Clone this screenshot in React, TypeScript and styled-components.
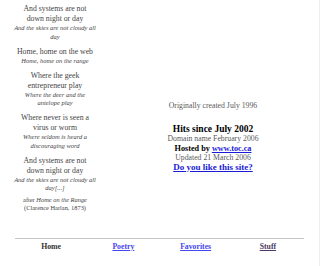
import React from 'react';
import styled, { createGlobalStyle } from 'styled-components';

const GlobalStyle = createGlobalStyle`
  html, body {
    margin: 0;
    padding: 0;
    background: #fff;
  }
  body {
    font-family: "Liberation Serif", "Times New Roman", serif;
  }
`;

type Stanza = {
  lines: string[];
  echo: string[];
};

const stanzas: Stanza[] = [
  { lines: ['And systems are not', 'down night or day'], echo: ['And the skies are not cloudy all', 'day'] },
  { lines: ['Home, home on the web'], echo: ['Home, home on the range'] },
  { lines: ['Where the geek', 'entrepreneur play'], echo: ['Where the deer and the', 'antelope play'] },
  { lines: ['Where never is seen a', 'virus or worm'], echo: ['Where seldom is heard a', 'discouraging word'] },
  { lines: ['And systems are not', 'down night or day'], echo: ['And the skies are not cloudy all', 'day[...]'] },
];

const navItems = [
  { label: 'Home', tone: 'current' },
  { label: 'Poetry', tone: 'link' },
  { label: 'Favorites', tone: 'link' },
  { label: 'Stuff', tone: 'visited' },
] as const;

const Page = styled.div`
  box-sizing: border-box;
  width: 320px;
  height: 266px;
  overflow: hidden;
  border-right: 1px solid #eeeeee;
  display: flex;
  flex-direction: column;
`;

const Main = styled.div`
  display: grid;
  grid-template-columns: 110px 206px;
`;

const PoemColumn = styled.div`
  padding-top: 4px;
  display: flex;
  flex-direction: column;
  gap: 5.5px;
  text-align: center;
`;

const Verse = styled.div`
  display: flex;
  flex-direction: column;
`;

const Line = styled.div`
  font-size: 7.75px;
  line-height: 10px;
  color: #444;
`;

const Echo = styled.div`
  font-size: 6.5px;
  line-height: 8.5px;
  font-style: italic;
  color: #444;
`;

const Credit = styled.div`
  margin-top: -2.5px;
  font-size: 6.4px;
  line-height: 8px;
  color: #444;

  em {
    font-style: italic;
  }
`;

const InfoColumn = styled.div`
  padding-top: 101px;
  text-align: center;
  display: flex;
  flex-direction: column;
`;

const Note = styled.div<{ $gap?: number }>`
  font-size: 7.75px;
  line-height: 9.5px;
  color: #5a5a5a;
  margin-bottom: ${(p) => p.$gap ?? 0}px;
`;

const Strong = styled.div<{ $size?: number }>`
  font-size: ${(p) => p.$size ?? 8.2}px;
  line-height: ${(p) => (p.$size && p.$size > 9.2 ? 10 : 9.5)}px;
  font-weight: bold;
  color: #000;
`;

const SiteLink = styled.a`
  color: #1a1ad8;
  text-decoration: underline;
  font-weight: bold;
`;

const Footer = styled.div`
  margin: auto 15px 0;
  padding-bottom: 14px;
`;

const Rule = styled.hr`
  margin: 0;
  border: 0;
  border-top: 1px solid #c4c4c4;
  height: 0;
`;

const Nav = styled.nav`
  display: grid;
  grid-template-columns: repeat(4, 1fr);
  padding-top: 3px;
  text-align: center;
  font-size: 7.75px;
  line-height: 10px;
`;

const NavItem = styled.a<{ $tone: 'current' | 'link' | 'visited' }>`
  font-weight: bold;
  color: ${(p) => (p.$tone === 'current' ? '#333' : p.$tone === 'link' ? '#4646f0' : '#4d3a66')};
  text-decoration: ${(p) => (p.$tone === 'current' ? 'none' : 'underline')};
`;

export default function App(): JSX.Element {
  return (
    <>
      <GlobalStyle />
      <Page>
        <Main>
          <PoemColumn>
            {stanzas.map((s, i) => (
              <Verse key={i}>
                {s.lines.map((l) => (
                  <Line key={l}>{l}</Line>
                ))}
                {s.echo.map((l) => (
                  <Echo key={l}>{l}</Echo>
                ))}
              </Verse>
            ))}
            <Credit>
              after <em>Home on the Range</em>
              <br />
              (Clarence Harlan, 1873)
            </Credit>
          </PoemColumn>
          <InfoColumn>
            <Note $gap={13.5}>Originally created July 1996</Note>
            <Strong $size={9.5}>Hits since July 2002</Strong>
            <Note>Domain name February 2006</Note>
            <Strong>
              Hosted by <SiteLink href="#">www.toc.ca</SiteLink>
            </Strong>
            <Note>Updated 21 March 2006</Note>
            <Strong $size={9}>
              <SiteLink href="#">Do you like this site?</SiteLink>
            </Strong>
          </InfoColumn>
        </Main>
        <Footer>
          <Rule />
          <Nav>
            {navItems.map((n) => (
              <div key={n.label}>
                <NavItem href="#" $tone={n.tone}>
                  {n.label}
                </NavItem>
              </div>
            ))}
          </Nav>
        </Footer>
      </Page>
    </>
  );
}
